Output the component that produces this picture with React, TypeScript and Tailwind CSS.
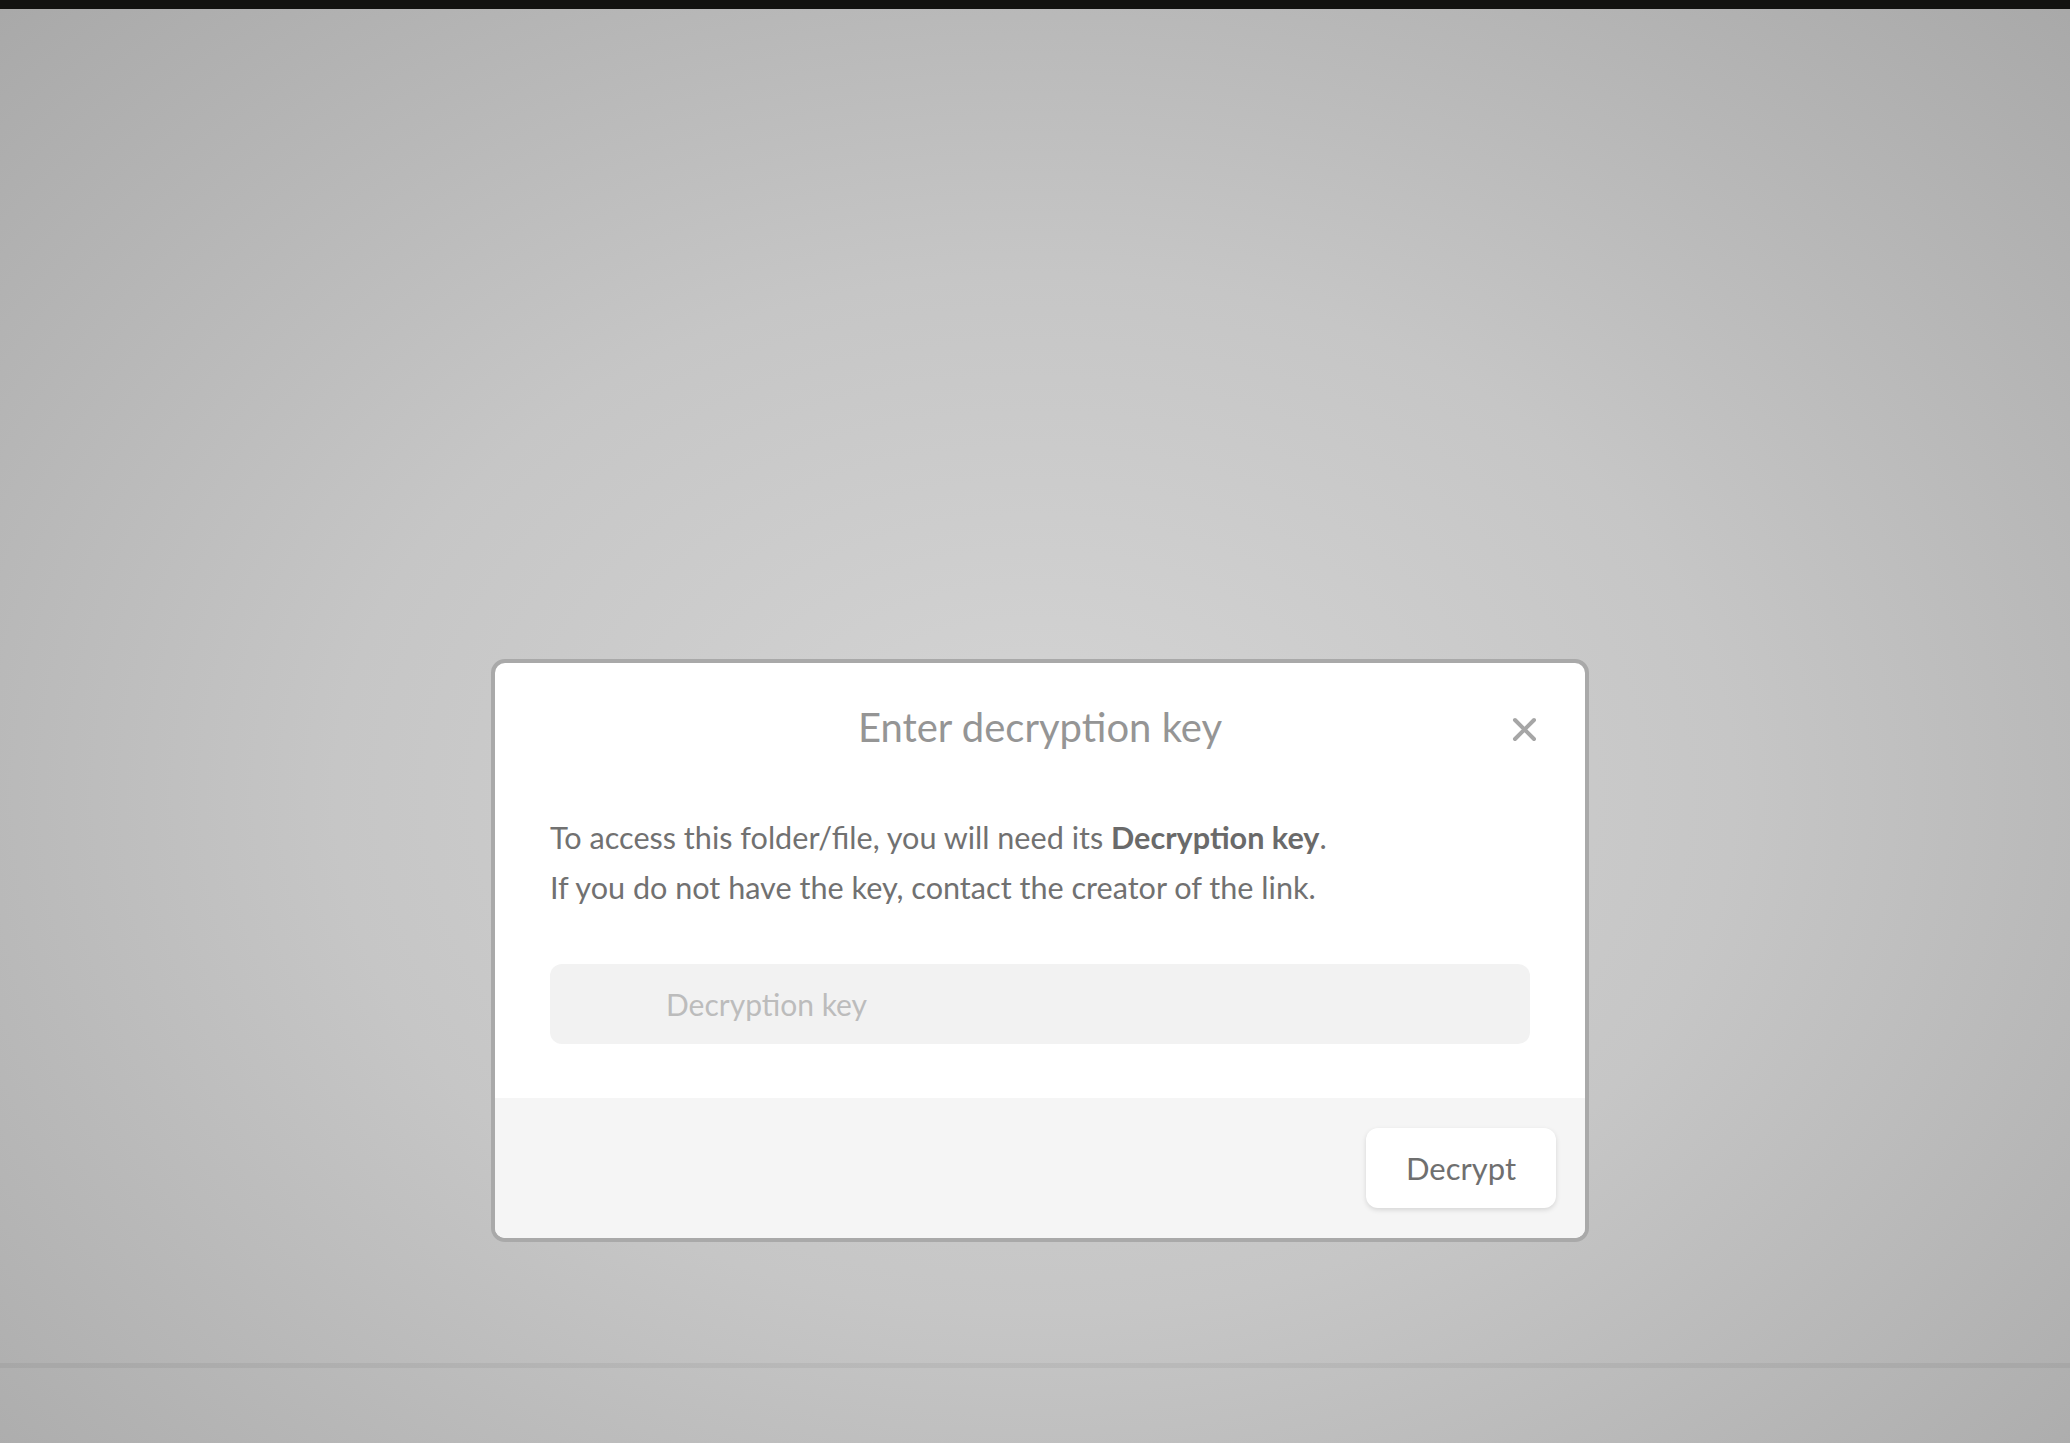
import { useState } from "react";

const CloseIcon = () => (
  <svg width="25" height="25" viewBox="0 0 25 25" fill="none">
    <path
      d="M3 3L22 22M22 3L3 22"
      stroke="#a6a6a6"
      strokeWidth="4"
      strokeLinecap="round"
    />
  </svg>
);

const DecryptDialog = () => {
  const [key, setKey] = useState("");

  return (
    <div className="relative w-[1098px] overflow-hidden rounded-[14px] border-4 border-[#a9a9a9] bg-white">
      {/* Header */}
      <div className="relative pt-[36px] text-center">
        <h2 className="text-[40px] leading-[56px] text-[#959595]">Enter decryption key</h2>
        <button className="absolute right-[48px] top-[54px]" aria-label="Close">
          <CloseIcon />
        </button>
      </div>

      {/* Body */}
      <div className="px-[55px] pb-[54px] pt-[58px]">
        <p className="text-[30.6px] leading-[50px] text-[#717171]">
          To access this folder/file, you will need its{" "}
          <span className="font-bold text-[#6a6a6a]">Decryption key</span>.
          <br />
          If you do not have the key, contact the creator of the link.
        </p>
        <input
          value={key}
          onChange={(e) => setKey(e.target.value)}
          placeholder="Decryption key"
          className="mt-[51px] h-[80px] w-full rounded-[12px] bg-[#f2f2f2] pl-[116px] text-[30px] text-[#6f6f6f] outline-none placeholder:text-[#bcbcbc]"
        />
      </div>

      {/* Footer */}
      <div className="flex justify-end bg-[#f5f5f5] px-[29px] py-[30px]">
        <button className="h-[80px] w-[190px] rounded-[12px] bg-white text-[31px] text-[#6f6f6f] shadow-[0_2px_5px_rgba(0,0,0,0.13)]">
          Decrypt
        </button>
      </div>
    </div>
  );
};

export default function App() {
  return (
    <div
      className="flex h-[1443px] w-full flex-col overflow-hidden bg-[radial-gradient(ellipse_75%_80%_at_50%_55%,#d5d5d5_0%,#c6c6c6_45%,#a6a6a6_100%)]"
      style={{ fontFamily: "Lato, 'Open Sans', sans-serif" }}
    >
      <div className="h-[9px] shrink-0 bg-[#121210]" />
      <main className="flex flex-1 justify-center pl-[10px] pt-[650px]">
        <div>
          <DecryptDialog />
        </div>
      </main>
      <div className="h-[5px] shrink-0 bg-black/[0.05]" />
      <div className="h-[75px] shrink-0" />
    </div>
  );
}
